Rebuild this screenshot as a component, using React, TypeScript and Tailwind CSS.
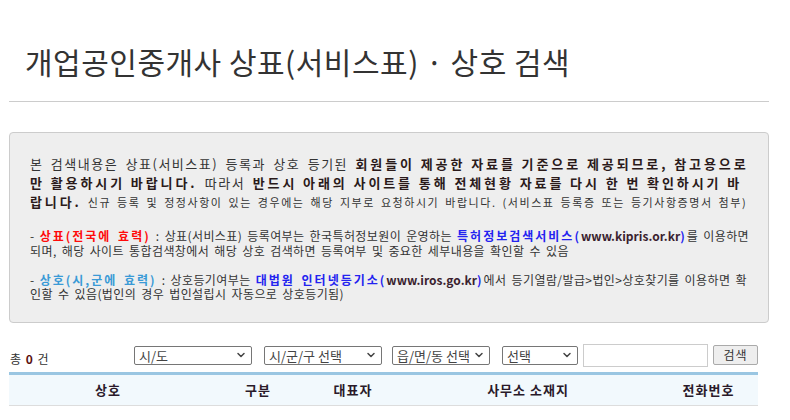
import { ChevronDown } from "lucide-react";

const font = { fontFamily: '"Noto Sans CJK KR", "Noto Sans", sans-serif' };

function Select({ label, w }: { label: string; w: string }) {
  return (
    <div
      className={`${w} h-[19px] flex items-center justify-between border border-[#767676] rounded-[2px] bg-white pl-[4px] pr-[4px] text-[13px] text-[#444]`}
    >
      <span className="leading-none">{label}</span>
      <ChevronDown className="w-[12px] h-[12px] text-[#444]" strokeWidth={3} />
    </div>
  );
}

// Gulim-like spacing on top of Noto
const main = "tracking-[1.5px] [word-spacing:3px]";
const mainB = "font-bold text-[#2a1a1a] tracking-[2.9px]";
const small = "text-[11px] tracking-[1.55px] [word-spacing:2px]";
const line12 = "h-[14.5px] leading-[15px] whitespace-nowrap tracking-[0.4px] [word-spacing:2px]";
const b12 = "font-bold tracking-[2px]";

export default function App() {
  const cols = [
    { name: "상호", w: "w-[198px]" },
    { name: "구분", w: "w-[102px]" },
    { name: "대표자", w: "w-[88px]" },
    { name: "사무소 소재지", w: "w-[262px]" },
    { name: "전화번호", w: "flex-1" },
  ];

  return (
    <div className="w-[790px] h-[420px] bg-white overflow-hidden" style={font}>
      <div className="pl-[9px] pr-[21px]">
        {/* title */}
        <div className="pt-[41px] pb-[20px] border-b border-[#cccccc]">
          <h1 className="pl-[16px] text-[30px] leading-[40px] font-normal tracking-[0.5px] text-[#333]">
            개업공인중개사 상표(서비스표) · 상호 검색
          </h1>
        </div>

        {/* notice box */}
        <div className="mt-[30px] border border-[#cccccc] rounded-[4px] bg-[#eeeeee] pl-[20px] pr-[10px] pt-[21px] pb-[21px] text-[#333]">
          <div className="text-[13px] leading-[19px]">
            <div className="whitespace-nowrap">
              <span className={main}>본 검색내용은 상표(서비스표) 등록과 상호 등기된 </span>
              <span className={mainB}>회원들이 제공한 자료를 기준으로 제공되므로, 참고용으로</span>
            </div>
            <div className="whitespace-nowrap">
              <span className={mainB}>만 활용하시기 바랍니다.</span>
              <span className={main}> 따라서 </span>
              <span className={mainB}>반드시 아래의 사이트를 통해 전체현황 자료를 다시 한 번 확인하시기 바</span>
            </div>
            <div className="whitespace-nowrap">
              <span className={mainB}>랍니다.</span>
              <span className={small}>
                {" "}
                신규 등록 및 정정사항이 있는 경우에는 해당 지부로 요청하시기 바랍니다. (서비스표 등록증 또는
                등기사항증명서 첨부)
              </span>
            </div>
          </div>

          <div className="mt-[16px] text-[12px]">
            <div className={line12}>
              - <span className={`${b12} text-[#ff0a0a]`}>상표(전국에 효력)</span> : 상표(서비스표) 등록여부는
              한국특허정보원이 운영하는 <span className={`${b12} text-[#2323f0]`}>특허정보검색서비스(</span>
              <span className="font-bold text-[#3a1f2f] tracking-normal">www.kipris.or.kr</span>
              <span className={`${b12} text-[#2323f0]`}>)</span>를 이용하면
            </div>
            <div className={line12}>
              되며, 해당 사이트 통합검색창에서 해당 상호 검색하면 등록여부 및 중요한 세부내용을 확인할 수 있음
            </div>
          </div>

          <div className="mt-[14.5px] text-[12px]">
            <div className={line12}>
              - <span className={`${b12} text-[#3a9ad6]`}>상호(시,군에 효력)</span> : 상호등기여부는{" "}
              <span className={`${b12} text-[#2323f0]`}>대법원 인터넷등기소(</span>
              <span className="font-bold text-[#3a1f2f] tracking-normal">www.iros.go.kr</span>
              <span className={`${b12} text-[#2323f0]`}>)</span>에서 등기열람/발급&gt;법인&gt;상호찾기를 이용하면 확
            </div>
            <div className={line12}>인할 수 있음(법인의 경우 법인설립시 자동으로 상호등기됨)</div>
          </div>
        </div>

        {/* search bar */}
        <div className="mt-[21px] w-[749px] flex items-end justify-between">
          <div className="text-[12px] leading-[14px] text-[#333] pl-[1px] pb-[1px] tracking-[1px]">
            총 <b className="text-[#5a1010]">0</b> 건
          </div>
          <div className="flex items-center">
            <Select label="시/도" w="w-[118px]" />
            <div className="w-[12px]" />
            <Select label="시/군/구 선택" w="w-[118px]" />
            <div className="w-[10px]" />
            <Select label="읍/면/동 선택" w="w-[98px]" />
            <div className="w-[12px]" />
            <Select label="선택" w="w-[76px]" />
            <div className="w-[5px]" />
            <div className="w-[125px] h-[23px] border border-[#cccccc] bg-white" />
            <div className="w-[5px]" />
            <button className="w-[45px] h-[20px] border border-[#aaaaaa] rounded-[2px] bg-[#eeeeee] text-[12px] leading-none text-[#333] tracking-[1px]">
              검색
            </button>
          </div>
        </div>

        {/* table header */}
        <div className="mt-[5px] w-[749px] border-t-[3px] border-[#9ac6e2] border-b border-b-[#dddddd] bg-[#f2f9fd] h-[34px] flex items-center">
          {cols.map((c) => (
            <div
              key={c.name}
              className={`${c.w} text-center text-[13px] font-bold tracking-[1px] text-[#2a1a2a]`}
            >
              {c.name}
            </div>
          ))}
        </div>
      </div>
    </div>
  );
}
